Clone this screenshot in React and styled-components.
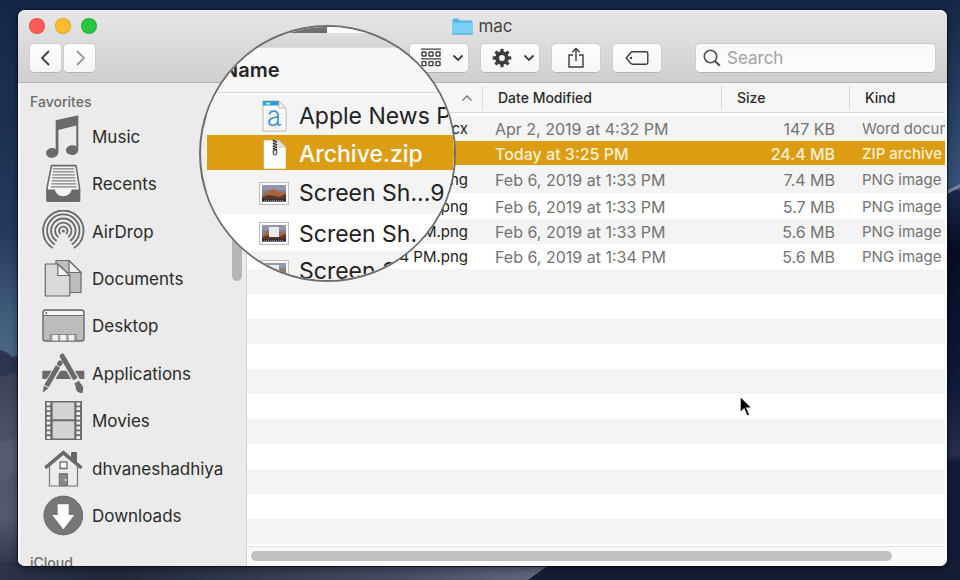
import React from "react";
import styled, { createGlobalStyle, css } from "styled-components";

const GlobalStyle = createGlobalStyle`
  *, *::before, *::after { box-sizing: border-box; }
  body { margin: 0; background: #16294a; }
  body, button, input, table { font-family: Inter, "Liberation Sans", sans-serif; }
  ul { list-style: none; margin: 0; padding: 0; }
`;

const GOLD = "#dc9d13";
const GLYPH = "#6a6a6a";

const Desktop = styled.main`
  position: relative;
  min-height: 100vh;
  display: flex;
  padding: 10px 13px 14px 18px;
  overflow: hidden;
`;

const WallpaperArt = styled.svg`
  position: absolute;
  inset: 0;
  width: 100%;
  height: 100%;
`;

const Window = styled.section`
  position: relative;
  flex: 1;
  min-width: 0;
  display: flex;
  flex-direction: column;
  border-radius: 7px;
  background: #fff;
  box-shadow: 0 0 0 1px rgba(8, 14, 32, 0.8), 0 2px 8px rgba(0, 0, 0, 0.5);
`;

const TitleBar = styled.header`
  display: flex;
  flex-direction: column;
  height: 73px;
  padding: 0 11px;
  border-radius: 7px 7px 0 0;
  border-top: 1px solid #f8f8f8;
  border-bottom: 1px solid #b4b4b4;
  background: linear-gradient(#e6e6e6, #cfcfcf);
`;

const TitleRow = styled.div`
  display: grid;
  grid-template-columns: 1fr auto 1fr;
  align-items: center;
  height: 30px;
`;

const Lights = styled.div`
  display: flex;
  gap: 10px;
`;

const Light = styled.button`
  width: 16px;
  height: 16px;
  padding: 0;
  border: 1px solid rgba(0, 0, 0, 0.12);
  border-radius: 50%;
  background: ${(p) => p.$color};
`;

const Title = styled.h1`
  display: flex;
  align-items: center;
  gap: 5px;
  margin: 0;
  font-size: 17px;
  line-height: 20px;
  font-weight: 400;
  color: #444;
`;

const ToolRow = styled.div`
  display: flex;
  align-items: center;
  height: 34px;
`;

const NavButtons = styled.div`
  display: flex;
  gap: 1px;
  margin-right: auto;
`;

const Tools = styled.div`
  display: flex;
  gap: 11px;
  margin-right: 33px;
`;

const ToolButton = styled.button`
  display: flex;
  align-items: center;
  justify-content: ${(p) => (p.$menu ? "space-between" : "center")};
  width: ${(p) => p.$width}px;
  height: 30px;
  padding: ${(p) => (p.$menu ? "0 4px 0 11px" : "0")};
  border: 1px solid #cdcdcd;
  border-bottom-color: #b5b5b5;
  border-radius: 5px;
  background: linear-gradient(#fefefe, #f5f5f5);
  color: ${(p) => (p.$faded ? "#999" : "#3d3d3d")};
`;

const SearchField = styled.label`
  display: flex;
  align-items: center;
  gap: 6px;
  width: 241px;
  height: 30px;
  padding: 0 7px;
  border: 1px solid #cdcdcd;
  border-bottom-color: #b5b5b5;
  border-radius: 5px;
  background: linear-gradient(#f8f8f8, #fdfdfd);
  color: #505050;
`;

const SearchInput = styled.input`
  flex: 1;
  min-width: 0;
  padding: 0;
  border: 0;
  outline: 0;
  background: none;
  font-size: 17px;
  color: #333;
  &::placeholder { color: #a2a2a2; opacity: 1; }
`;

const Body = styled.div`
  flex: 1;
  display: flex;
  min-height: 0;
  border-radius: 0 0 7px 7px;
  overflow: hidden;
`;

const Sidebar = styled.nav`
  position: relative;
  flex: none;
  display: flex;
  flex-direction: column;
  width: 229px;
  border-left: 2px solid #f8f8f8;
  border-right: 1px solid #d2d2d2;
  background: #ebebeb;
`;

const SidebarHeading = styled.h2`
  margin: 0;
  padding: ${(p) => (p.$last ? "14px" : "10px")} 10px 0;
  height: ${(p) => (p.$last ? "26px" : "30px")};
  overflow: hidden;
  font-size: 14px;
  line-height: 18px;
  font-weight: 500;
  color: #6b6b6b;
`;

const Places = styled.ul`
  flex: 1;
  display: flex;
  flex-direction: column;
`;

const Place = styled.li`
  flex: 1;
  display: flex;
`;

const PlaceLink = styled.a`
  display: flex;
  align-items: center;
  gap: 7px;
  padding-left: 21px;
  font-size: 17px;
  line-height: 20px;
  color: #2a2a2a;
  text-decoration: none;
`;

const SidebarThumb = styled.div`
  position: absolute;
  top: 100px;
  right: 4px;
  width: 10px;
  height: 98px;
  border-radius: 5px;
  background: #b7b7b7;
`;

const ListPane = styled.div`
  flex: 1;
  min-width: 0;
  display: flex;
  flex-direction: column;
  border-right: 2px solid #fafafa;
`;

const FileTable = styled.table`
  width: 100%;
  table-layout: fixed;
  border-collapse: separate;
  border-spacing: 0;
  white-space: nowrap;
  thead::after { content: ""; display: block; height: 3px; }
`;

const Col = styled.col`
  width: ${(p) => (p.$width ? `${p.$width}px` : "auto")};
`;

const ColumnHeader = styled.th`
  height: 30px;
  padding: 2px 0;
  border-bottom: 1px solid #d8d8d8;
  background: #f6f6f6;
  font-size: 14px;
  font-weight: 500;
  text-align: left;
  color: #2a2a2a;
`;

const HeaderLabel = styled.div`
  display: flex;
  align-items: center;
  justify-content: ${(p) => (p.$end ? "flex-end" : "flex-start")};
  height: 24px;
  padding: 0 9px 0 15px;
  border-right: ${(p) => (p.$rule ? "1px solid #d9d9d9" : "0")};
`;

const FileRow = styled.tr`
  height: ${(p) => p.$height}px;
  background: ${(p) => (p.$striped ? "#f4f4f4" : "#fff")};
  color: #737373;
  ${(p) => p.$selected && css`
    background: ${GOLD};
    color: #fdf0cf;
  `}
`;

const Cell = styled.td`
  padding: 1px ${(p) => (p.$end ? "15px" : "0")} 0 12px;
  overflow: hidden;
  font-size: ${(p) => (p.$compact ? 15 : 16)}px;
  line-height: 20px;
  font-weight: ${(p) => (p.$strong ? 500 : 400)};
  text-align: ${(p) => (p.$end ? "right" : "left")};
  color: ${(p) => (p.$name ? "#222" : "inherit")};
`;

const EmptyRows = styled.div`
  flex: 1;
  background: repeating-linear-gradient(#f4f4f4 0 25px, #fff 25px 50px);
`;

const ScrollTrack = styled.div`
  height: 20px;
  padding: 4px 53px 5px 4px;
  border-top: 1px solid #e2e2e2;
  background: #fafafa;
`;

const ScrollThumb = styled.div`
  height: 10px;
  border-radius: 5px;
  background: #c1c1c1;
`;

const Lens = styled.aside`
  position: absolute;
  left: 181px;
  top: 15px;
  width: 257px;
  height: 257px;
  padding-left: 6px;
  border: 2px solid #6e6e6e;
  border-radius: 50%;
  overflow: hidden;
  background: #efefef;
  white-space: nowrap;
`;

const LensTop = styled.div`
  height: 21px;
  margin-left: -6px;
  border-top: 6px solid #fafafa;
  border-bottom: 1px solid #bdbdbd;
  border-image: linear-gradient(90deg, #6e6e6e 50%, #fafafa 50%) 6 0 0 0;
  background: linear-gradient(#dedede, #d3d3d3);
`;

const LensHeader = styled.h2`
  height: 45px;
  margin: 0;
  padding-left: 16px;
  border-bottom: 1px solid #d6d6d6;
  background: #f7f7f7;
  font-size: 20px;
  line-height: 44px;
  font-weight: 600;
  color: #262626;
`;

const LensList = styled.ul`
  padding-top: 2px;
  background: #fff;
`;

const LensRow = styled.li`
  display: grid;
  grid-template-columns: 30px auto;
  justify-items: center;
  justify-content: start;
  align-items: center;
  gap: 10px;
  height: ${(p) => p.$height}px;
  padding: 2px 0 0 52px;
  background: ${(p) => (p.$selected ? GOLD : p.$striped ? "#f4f4f4" : "#fff")};
  font-size: 23px;
  line-height: 28px;
  font-weight: ${(p) => (p.$selected ? 500 : 400)};
  color: ${(p) => (p.$selected ? "#fff" : "#222")};
`;

const PointerArt = styled.svg`
  position: absolute;
  left: 720px;
  top: 384px;
`;

function Wallpaper() {
  return (
    <WallpaperArt viewBox="0 0 960 580" preserveAspectRatio="none" aria-hidden="true">
      <defs>
        <linearGradient id="sky" x2="0" y2="1">
          <stop offset="0" stopColor="#152745" />
          <stop offset=".4" stopColor="#223a5d" />
          <stop offset=".55" stopColor="#435d7d" />
          <stop offset=".68" stopColor="#536e8e" />
        </linearGradient>
        <linearGradient id="skyEast" x2="0" y2="1">
          <stop offset="0" stopColor="#152745" />
          <stop offset="1" stopColor="#38547c" />
        </linearGradient>
        <linearGradient id="dune" x2="0" y2="1">
          <stop offset="0" stopColor="#3a4159" />
          <stop offset=".33" stopColor="#4d5269" />
          <stop offset=".7" stopColor="#535871" />
          <stop offset="1" stopColor="#252c40" />
        </linearGradient>
        <linearGradient id="east" x2="0" y2="1">
          <stop offset="0" stopColor="#1a2950" />
          <stop offset=".15" stopColor="#080d22" />
          <stop offset=".5" stopColor="#0f1939" />
          <stop offset=".68" stopColor="#292f4d" />
          <stop offset=".7" stopColor="#131a36" />
          <stop offset="1" stopColor="#141a34" />
        </linearGradient>
        <linearGradient id="sand">
          <stop offset="0" stopColor="#2c3349" />
          <stop offset=".2" stopColor="#20283a" />
          <stop offset=".7" stopColor="#444b60" />
          <stop offset="1" stopColor="#636880" />
        </linearGradient>
      </defs>
      <rect width="960" height="580" fill="url(#sky)" />
      <rect x="480" width="480" height="192" fill="url(#skyEast)" />
      <path d="M0 350L8 353L12 357L20 355V580H0Z" fill="#2d3550" />
      <path d="M0 377L20 371V580H0Z" fill="url(#dune)" />
      <path d="M0 443L20 437V470L0 482Z" fill="#666a82" opacity=".35" />
      <path d="M480 190H960V580H480Z" fill="url(#east)" />
      <path d="M944 192L960 184V187L944 196Z" fill="#7c849b" />
      <path d="M0 562H555L528 580H0Z" fill="url(#sand)" />
      <path d="M553 562H960V580H528Z" fill="#161d36" />
    </WallpaperArt>
  );
}

const placeIcons = {
  Music: (
    <path
      fill={GLYPH}
      d="M14.7 5.3L37.3.3V34.5C37.3 38 34.6 40 31.2 40S25 38.2 25 35.3s2.9-5.1 6.3-5.1c1.6 0 2.9.4 4 1.1V10.4L17.4 15v22c0 3.2-3 5.8-6.7 5.8-3.2 0-5.6-1.8-5.6-4.5 0-3 2.8-5.2 6.1-5.2 1.3 0 2.5.3 3.5.8z"
    />
  ),
  Recents: (
    <g>
      <path d="M10.5 3.6H35L38.5 26V39H6V26Z" fill="#f3f3f3" stroke={GLYPH} strokeWidth="1.6" strokeLinejoin="round" />
      <path d="M12 6.8H33M11.8 9.8H33.4M11.4 12.8H33.8M11 15.8H34.3M10.6 18.8H34.8M10.2 21.8H35.2M9.8 24.8H35.6" stroke="#808080" strokeWidth="1.3" />
      <path d="M5.3 27.5H13.8C15 32 18 34.2 22.2 34.2S29.5 32 30.7 27.5H39.3L38.6 38.6Q38.5 39.7 37.3 39.7H7.3Q6.1 39.7 6 38.6Z" fill={GLYPH} />
      <path d="M14.5 27.5H30C29 31 26 32.8 22.2 32.8S15.6 31 14.5 27.5Z" fill="#f3f3f3" />
    </g>
  ),
  AirDrop: (
    <g fill="none" stroke={GLYPH} strokeWidth="1.8">
      <path d="M11.7 37.9A20.2 20.2 0 1 1 32.9 37.9" />
      <path d="M13.8 34.4A16.2 16.2 0 1 1 30.8 34.4" />
      <path d="M15.6 30.9A12.2 12.2 0 1 1 29 30.9" />
      <path d="M17.4 27.4A8.2 8.2 0 1 1 27.2 27.4" />
      <path d="M19.6 24A4.2 4.2 0 1 1 25 24" />
      <circle cx="22.3" cy="20.9" r="1.5" fill={GLYPH} stroke="none" />
    </g>
  ),
  Documents: (
    <g stroke={GLYPH} strokeWidth="1.2" strokeLinejoin="round">
      <path d="M15 3.5H28L40 15.5V35.5H15Z" fill="#bdbdbd" />
      <path d="M28 3.5V15.5H40Z" fill="#eee" />
      <path d="M4.3 7H16.8L28.8 18.5V39H4.3Z" fill="#d9d9d9" />
      <path d="M16.8 7V18.5H28.8Z" fill="#f2f2f2" />
    </g>
  ),
  Desktop: (
    <g>
      <rect x="2" y="6" width="41" height="31" rx="2.5" fill="#bcbcbc" stroke={GLYPH} strokeWidth="1.4" />
      <path d="M3 11V8.5Q3 7 4.5 7H40.5Q42 7 42 8.5V11Z" fill="#f4f4f4" />
      <path d="M3 11.5H42" stroke={GLYPH} />
      <circle cx="5.3" cy="9" r="1" fill={GLYPH} />
      <path d="M9.3 36.5V30.5H35.3V36.5Z" fill="#a0a0a0" stroke="#888" />
      <path d="M11.3 31H17V36.5H11.3ZM19.3 31H25.2V36.5H19.3ZM27.7 31H33.2V36.5H27.7Z" fill="#f0f0f0" />
    </g>
  ),
  Applications: (
    <g>
      <path d="M1.3 18.8H43.3V27H1.3Z" fill={GLYPH} />
      <path d="M18.2 13.6L5.5 34.4" stroke="#ebebeb" strokeWidth="7.5" />
      <path d="M21.5 5L38.5 33.8" stroke="#ebebeb" strokeWidth="7.5" />
      <path d="M17 14.5L5.5 34" stroke={GLYPH} strokeWidth="5" />
      <path d="M18.6 11.8L19.2 10.8" stroke={GLYPH} strokeWidth="5" strokeLinecap="round" />
      <path d="M3 33.8L7.4 36.3L1.5 40.8Z" fill={GLYPH} />
      <path d="M21.3 4.2L34 26.3" stroke={GLYPH} strokeWidth="5" strokeLinecap="round" />
      <path d="M32 29.4L37 26.5" stroke="#ebebeb" strokeWidth="1.5" />
      <path d="M33.4 31.5L38 28.8L39.3 31.3C42 33 43 37 41.4 41C37.5 41.3 34.3 39 34.6 34Z" fill={GLYPH} />
    </g>
  ),
  Movies: (
    <g>
      <path d="M4 2H41V41H4Z" fill={GLYPH} />
      <path d="M11.7 3.5H33.3V20.2H11.7ZM11.7 22.2H33.3V39.5H11.7Z" fill="#d4d4d4" />
      <path d="M7.5 3.4V41M37.3 3.4V41" stroke="#efefef" strokeWidth="3.6" strokeDasharray="3 1.8" />
    </g>
  ),
  dhvaneshadhiya: (
    <g>
      <path d="M30.7 5.5H35.3V17L30.7 13Z" fill={GLYPH} stroke="#555" />
      <path d="M8.5 18.5L22.3 7L36.5 18.5V39H8.5Z" fill="#ececec" stroke="#777" strokeWidth="1.2" />
      <path d="M22.3 3.2L41.5 19.6L39.5 22.3L22.3 8L5.2 22.3L3.2 19.6Z" fill={GLYPH} />
      <path d="M19 14.8H26V21.5H19Z" fill="#f4f4f4" stroke={GLYPH} strokeWidth="1.3" />
      <path d="M18.3 26.7H26.5V38.7H18.3Z" fill="#888" stroke={GLYPH} />
      <circle cx="24.6" cy="33" r="1" fill="#eee" />
    </g>
  ),
  Downloads: (
    <g>
      <circle cx="22.3" cy="21.5" r="20.2" fill="#f6f6f6" />
      <circle cx="22.3" cy="21.5" r="19.4" fill="#777" stroke={GLYPH} />
      <path d="M16.7 10.2H27.7V20.9H33.3L22.3 35.3L11.3 20.9H16.7Z" fill="#fff" />
    </g>
  ),
};

const places = Object.keys(placeIcons);

const files = [
  { name: "ocx", date: "Apr 2, 2019 at 4:32 PM", size: "147 KB", kind: "Word document", height: 25, striped: true },
  { name: "", date: "Today at 3:25 PM", size: "24.4 MB", kind: "ZIP archive", height: 24, selected: true },
  { name: "ng", date: "Feb 6, 2019 at 1:33 PM", size: "7.4 MB", kind: "PNG image", height: 28, striped: true },
  { name: "png", date: "Feb 6, 2019 at 1:33 PM", size: "5.7 MB", kind: "PNG image", height: 26 },
  { name: "M.png", date: "Feb 6, 2019 at 1:33 PM", size: "5.6 MB", kind: "PNG image", height: 25, striped: true },
  { name: "4 PM.png", date: "Feb 6, 2019 at 1:34 PM", size: "5.6 MB", kind: "PNG image", height: 25 },
];

function Chevron({ direction }) {
  const shapes = {
    left: "M11 2L4 9L11 16",
    right: "M5 2L12 9L5 16",
  };
  return (
    <svg width="16" height="18" viewBox="0 0 16 18" fill="none" stroke="currentColor" strokeWidth="1.8">
      <path d={shapes[direction]} />
    </svg>
  );
}

function MenuArrow() {
  return (
    <svg width="12" height="8" viewBox="0 0 12 8" fill="none" stroke="currentColor" strokeWidth="1.8">
      <path d="M1.5 1.5L6 6L10.5 1.5" />
    </svg>
  );
}

function FolderIcon() {
  return (
    <svg width="21" height="17" viewBox="0 0 21 17" aria-hidden="true">
      <path d="M.5 2Q.5.5 2 .5H6L8 2.5H19Q20.5 2.5 20.5 4V16.5H.5Z" fill="#55b5e2" />
      <path d="M.5 4.5H20.5V16H.5Z" fill="#78d0f7" />
      <path d="M.5 16H20.5" stroke="#4da9d6" />
    </svg>
  );
}

function GroupIcon() {
  const xs = [1, 8, 15];
  return (
    <svg width="20" height="20" viewBox="0 0 20 20" fill="none" stroke="currentColor" strokeWidth="1.4">
      <path d="M0 1.2H20M0 10.8H20" strokeWidth="1.2" />
      {xs.map((x) => (
        <g key={x}>
          <rect x={x} y="4" width="4" height="4" rx=".6" />
          <rect x={x} y="13.6" width="4" height="4" rx=".6" />
        </g>
      ))}
    </svg>
  );
}

function GearIcon() {
  const teeth = [0, 45, 90, 135, 180, 225, 270, 315];
  return (
    <svg width="20" height="20" viewBox="0 0 20 20">
      <circle cx="10" cy="10" r="4.8" fill="none" stroke="currentColor" strokeWidth="3.8" />
      {teeth.map((a) => (
        <path key={a} d="M8.1 4.5L8.6 .7H11.4L11.9 4.5Z" fill="currentColor" transform={`rotate(${a} 10 10)`} />
      ))}
    </svg>
  );
}

function ShareIcon() {
  return (
    <svg width="18" height="22" viewBox="0 0 18 22" fill="none" stroke="currentColor" strokeWidth="1.4">
      <path d="M6 8H2V20H16V8H12M9 14V1.8M5.3 5.3L9 1.6L12.7 5.3" />
    </svg>
  );
}

function TagIcon() {
  return (
    <svg width="24" height="16" viewBox="0 0 24 16" fill="none" stroke="currentColor" strokeWidth="1.4">
      <path d="M7.5 1.8H21Q22.8 1.8 22.8 3.5V12.5Q22.8 14.2 21 14.2H7.5Q6.5 14.2 5.7 13.3L1.2 8L5.7 2.7Q6.5 1.8 7.5 1.8Z" />
      <circle cx="6" cy="8" r="1.2" fill="currentColor" stroke="none" />
    </svg>
  );
}

function SearchIcon() {
  return (
    <svg width="18" height="18" viewBox="0 0 18 18" fill="none" stroke="currentColor" strokeWidth="1.6" aria-hidden="true">
      <circle cx="7.5" cy="7.5" r="6.2" />
      <path d="M12 12L16.8 16.8" strokeWidth="2" />
    </svg>
  );
}

function WordFileIcon() {
  return (
    <svg width="28" height="32" viewBox="0 0 28 32" aria-hidden="true">
      <path d="M3 1H19L26 8V31H3Z" fill="#fbfbfb" stroke="#b9b9b9" />
      <path d="M3 1H19L23.5 5.5H3Z" fill="#2a9fd6" />
      <path d="M6 2.5L7 4.5L8 2.5L9 4.5L10 2.5" fill="none" stroke="#d5f0fb" />
      <path d="M19 1V8H26Z" fill="#f0f0f0" stroke="#b9b9b9" />
      <path d="M6 10.5H17M6 14H23M6 17.5H23M6 21H23M6 24.5H23M6 28H23" stroke="#dce7ef" />
      <g fill="none" stroke="#4c94c9" strokeWidth="1.8">
        <path d="M9.5 14.5C10 10.3 18 9.7 18 15V23.4C18 25.5 19.6 25.7 20.8 24.4" />
        <path d="M18 16.8C13 17.3 9 18.5 9 22C9 26.5 15.8 26.6 18 21.7" />
      </g>
    </svg>
  );
}

function ZipFileIcon() {
  return (
    <svg width="28" height="32" viewBox="0 0 28 32" aria-hidden="true">
      <path d="M3.5 2H18.5L26 9.5V31H3.5Z" fill="#fff" stroke="#c79a3a" strokeWidth=".6" />
      <path d="M18.5 2V9.5H26Z" fill="#e3e3e3" stroke="#c4c4c4" strokeWidth=".6" />
      <path d="M15 2V14" stroke="#aaa" strokeWidth="3" />
      <path d="M13.8 2V14M16.2 3V14" stroke="#222" strokeWidth="2" strokeDasharray="1.5 1.2" />
      <rect x="13.3" y="12" width="3.4" height="5" rx="1.3" fill="#ddd" stroke="#333" />
    </svg>
  );
}

function ScreenshotIcon({ windowed }) {
  return (
    <svg width="30" height="23" viewBox="0 0 30 23" aria-hidden="true">
      <rect x=".5" y=".5" width="29" height="22" fill="#fcfcfc" stroke="#bdbdbd" />
      <path d="M3 3H27V19.5H3Z" fill="#7c8197" />
      <path d="M3 3H27V8H3Z" fill="#9695ab" />
      <path d="M3 14L9 9L15 7L20 10L27 11V17H3Z" fill="#a8643a" />
      <path d="M3 15L10 13L20 15L27 12V17H3Z" fill="#5b3528" />
      <path d="M3 17H27V19.5H3Z" fill="#282632" />
      <path d="M5 18.3H24" stroke="#8fa7b8" strokeDasharray="1 1" />
      {windowed && <path d="M10 5H20V15H10Z" fill="#ececec" />}
    </svg>
  );
}

function Magnifier() {
  return (
    <Lens>
      <LensTop />
      <LensHeader>Name</LensHeader>
      <LensList>
        <LensRow $height={40} $striped><WordFileIcon />Apple News P</LensRow>
        <LensRow $height={35} $selected><ZipFileIcon />Archive.zip</LensRow>
        <LensRow $height={44} $striped><ScreenshotIcon />Screen Sh...9</LensRow>
        <LensRow $height={37}><ScreenshotIcon windowed />Screen Sh.</LensRow>
        <LensRow $height={38} $striped><ScreenshotIcon windowed />Screen S</LensRow>
      </LensList>
    </Lens>
  );
}

export default function App() {
  return (
    <Desktop>
      <GlobalStyle />
      <Wallpaper />
      <Window>
        <TitleBar>
          <TitleRow>
            <Lights>
              <Light $color="#fc5b57" aria-label="Close" />
              <Light $color="#fdbc2e" aria-label="Minimize" />
              <Light $color="#27c840" aria-label="Zoom" />
            </Lights>
            <Title><FolderIcon />mac</Title>
          </TitleRow>
          <ToolRow>
            <NavButtons>
              <ToolButton $width={33} aria-label="Back"><Chevron direction="left" /></ToolButton>
              <ToolButton $width={33} $faded aria-label="Forward"><Chevron direction="right" /></ToolButton>
            </NavButtons>
            <Tools>
              <ToolButton $width={60} $menu aria-label="Group items"><GroupIcon /><MenuArrow /></ToolButton>
              <ToolButton $width={60} $menu aria-label="Actions"><GearIcon /><MenuArrow /></ToolButton>
              <ToolButton $width={50} aria-label="Share"><ShareIcon /></ToolButton>
              <ToolButton $width={50} aria-label="Edit tags"><TagIcon /></ToolButton>
            </Tools>
            <SearchField>
              <SearchIcon />
              <SearchInput type="search" placeholder="Search" aria-label="Search" />
            </SearchField>
          </ToolRow>
        </TitleBar>
        <Body>
          <Sidebar>
            <SidebarHeading>Favorites</SidebarHeading>
            <Places>
              {places.map((name) => (
                <Place key={name}>
                  <PlaceLink href="#">
                    <svg width="44" height="44" viewBox="0 0 44 44" aria-hidden="true">{placeIcons[name]}</svg>
                    {name}
                  </PlaceLink>
                </Place>
              ))}
            </Places>
            <SidebarHeading $last>iCloud</SidebarHeading>
            <SidebarThumb />
          </Sidebar>
          <ListPane>
            <FileTable>
              <colgroup>
                <Col $width={236} />
                <Col $width={239} />
                <Col $width={128} />
                <Col />
              </colgroup>
              <thead>
                <tr>
                  <ColumnHeader aria-label="Name">
                    <HeaderLabel $end $rule>
                      <svg width="12" height="8" viewBox="0 0 12 8" fill="none" stroke="#777" strokeWidth="1.4">
                        <path d="M1.5 6.5L6 2L10.5 6.5" />
                      </svg>
                    </HeaderLabel>
                  </ColumnHeader>
                  <ColumnHeader><HeaderLabel $rule>Date Modified</HeaderLabel></ColumnHeader>
                  <ColumnHeader><HeaderLabel $rule>Size</HeaderLabel></ColumnHeader>
                  <ColumnHeader><HeaderLabel>Kind</HeaderLabel></ColumnHeader>
                </tr>
              </thead>
              <tbody>
                {files.map((f, i) => (
                  <FileRow key={i} $height={f.height} $striped={f.striped} $selected={f.selected}>
                    <Cell $name $compact $end>{f.name}</Cell>
                    <Cell $strong={f.selected}>{f.date}</Cell>
                    <Cell $end $strong={f.selected}>{f.size}</Cell>
                    <Cell $compact $strong={f.selected}>{f.kind}</Cell>
                  </FileRow>
                ))}
              </tbody>
            </FileTable>
            <EmptyRows />
            <ScrollTrack><ScrollThumb /></ScrollTrack>
          </ListPane>
        </Body>
        <Magnifier />
        <PointerArt width="18" height="26" viewBox="0 0 18 26" aria-hidden="true">
          <path d="M2 2V19L6 15.3L9 22.3L12 21L9 14.3H14.5Z" fill="#000" stroke="#fff" strokeWidth="1.4" />
        </PointerArt>
      </Window>
    </Desktop>
  );
}
